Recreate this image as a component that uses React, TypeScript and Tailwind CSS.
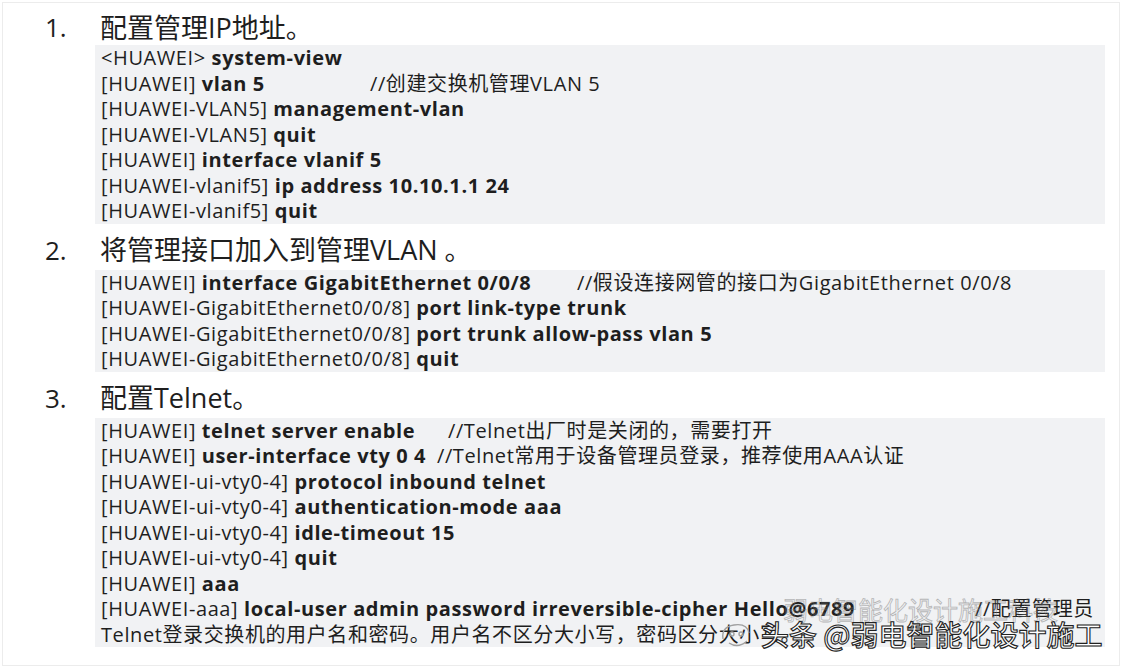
import React from 'react';

type Line = {
  prompt: string;
  cmd?: string;
  lead?: string;
  comment?: string;
};

const sections: { no: string; title: string; lines: Line[] }[] = [
  {
    no: '1.',
    title: '配置管理IP地址。',
    lines: [
      { prompt: '<HUAWEI> ', cmd: 'system-view' },
      { prompt: '[HUAWEI] ', cmd: 'vlan 5', lead: 'w-[269px]', comment: '//创建交换机管理VLAN 5' },
      { prompt: '[HUAWEI-VLAN5] ', cmd: 'management-vlan' },
      { prompt: '[HUAWEI-VLAN5] ', cmd: 'quit' },
      { prompt: '[HUAWEI] ', cmd: 'interface vlanif 5' },
      { prompt: '[HUAWEI-vlanif5] ', cmd: 'ip address 10.10.1.1 24' },
      { prompt: '[HUAWEI-vlanif5] ', cmd: 'quit' },
    ],
  },
  {
    no: '2.',
    title: '将管理接口加入到管理VLAN 。',
    lines: [
      {
        prompt: '[HUAWEI] ',
        cmd: 'interface GigabitEthernet 0/0/8',
        lead: 'w-[476px]',
        comment: '//假设连接网管的接口为GigabitEthernet 0/0/8',
      },
      { prompt: '[HUAWEI-GigabitEthernet0/0/8] ', cmd: 'port link-type trunk' },
      { prompt: '[HUAWEI-GigabitEthernet0/0/8] ', cmd: 'port trunk allow-pass vlan 5' },
      { prompt: '[HUAWEI-GigabitEthernet0/0/8] ', cmd: 'quit' },
    ],
  },
  {
    no: '3.',
    title: '配置Telnet。',
    lines: [
      { prompt: '[HUAWEI] ', cmd: 'telnet server enable', lead: 'w-[347px]', comment: '//Telnet出厂时是关闭的，需要打开' },
      {
        prompt: '[HUAWEI] ',
        cmd: 'user-interface vty 0 4',
        lead: 'w-[336px]',
        comment: '//Telnet常用于设备管理员登录，推荐使用AAA认证',
      },
      { prompt: '[HUAWEI-ui-vty0-4] ', cmd: 'protocol inbound telnet' },
      { prompt: '[HUAWEI-ui-vty0-4] ', cmd: 'authentication-mode aaa' },
      { prompt: '[HUAWEI-ui-vty0-4] ', cmd: 'idle-timeout 15' },
      { prompt: '[HUAWEI-ui-vty0-4] ', cmd: 'quit' },
      { prompt: '[HUAWEI] ', cmd: 'aaa' },
      {
        prompt: '[HUAWEI-aaa] ',
        cmd: 'local-user admin password irreversible-cipher Hello@6789',
        lead: 'w-[874px]',
        comment: '//配置管理员',
      },
      { prompt: 'Telnet登录交换机的用户名和密码。用户名不区分大小写，密码区分大小写。' },
    ],
  },
];

const CodeLine: React.FC<{ line: Line }> = ({ line }) => (
  <div className="flex h-[25.5px] items-center whitespace-pre">
    <span className={`${line.lead ?? ''} shrink-0`}>
      <span>{line.prompt}</span>
      {line.cmd && <span className="font-bold">{line.cmd}</span>}
    </span>
    {line.comment && <span>{line.comment}</span>}
  </div>
);

export default function App() {
  return (
    <div className="h-[668px] w-[1128px] overflow-hidden bg-white p-[2px] text-[#1e1e1e] [font-family:'Open_Sans','Noto_Sans_CJK_SC',sans-serif]">
      <div className="relative h-full w-[1118px] border border-[#ececec] pr-[14px] pl-[92px]">
        {sections.map((s, i) => (
          <div key={i}>
            <div className={`flex items-center ${i === 0 ? 'h-[42px] pt-[6px]' : 'h-[46px] pt-[6px]'}`}>
              <span className="-ml-[50px] w-[55px] text-[26px] leading-none">{s.no}</span>
              <span className="text-[27px] leading-none">{s.title}</span>
            </div>
            <div className="bg-[#f1f2f4] px-[6px] text-[20px] leading-[25.5px] tracking-[0.6px]">
              {s.lines.map((l, j) => (
                <CodeLine key={j} line={l} />
              ))}
            </div>
          </div>
        ))}

        {/* faint background watermark */}
        <div className="absolute top-[588px] left-[780px] text-[25px] text-transparent opacity-50 [-webkit-text-stroke:0.8px_#777] [font-family:'Noto_Sans_CJK_SC',sans-serif]">
          弱电智能化设计施工科技
        </div>

        {/* watermark */}
        <div className="absolute top-[610px] left-[716px] flex items-center gap-[6px]">
          <svg width="36" height="30" viewBox="0 0 36 30" fill="none" stroke="#a0a0a0" strokeWidth="1.4">
            <path d="M4 20 Q2 8 15 6 Q28 4 30 14" />
            <path d="M10 24 Q19 30 28 22" />
            <circle cx="13" cy="15" r="2" />
            <circle cx="22" cy="15" r="2" />
          </svg>
          <span className="text-[28px] font-medium text-white [-webkit-text-stroke:1.1px_#222] [font-family:'Noto_Sans_CJK_SC',sans-serif]">
            头条 @弱电智能化设计施工
          </span>
        </div>
      </div>
    </div>
  );
}
